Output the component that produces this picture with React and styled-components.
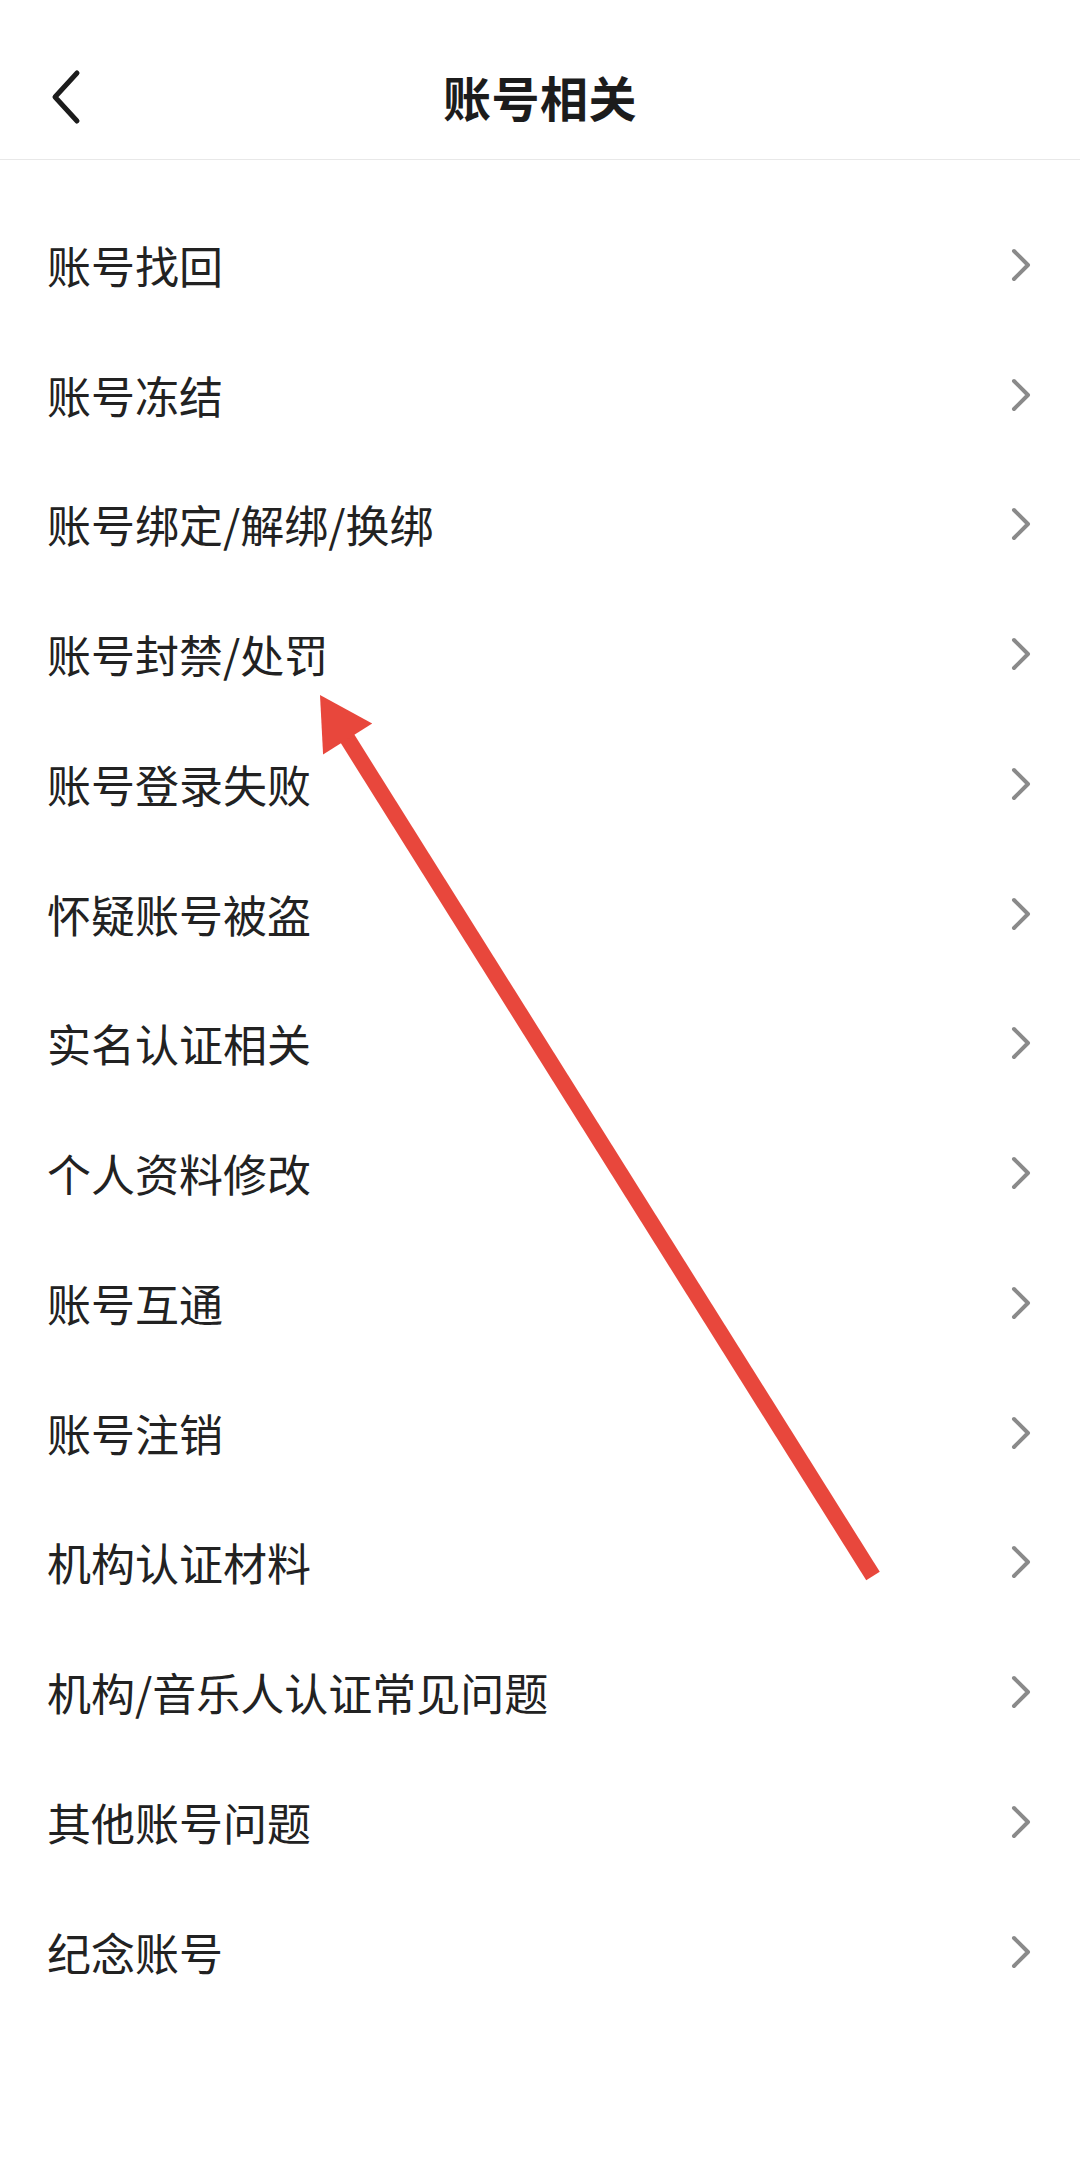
import React from "react";
import styled, { createGlobalStyle } from "styled-components";

const Global = createGlobalStyle`
  html, body { margin: 0; padding: 0; background: #ffffff; }
  body { font-family: "Noto Sans CJK SC", "Noto Sans", sans-serif; }
`;

const Page = styled.div`
  position: relative;
  width: 1080px;
  min-height: 2164px;
  background: #ffffff;
  overflow: hidden;
`;

const Header = styled.header`
  position: relative;
  height: 160px;
  display: flex;
  align-items: center;
  justify-content: center;
  padding-top: 34px;
  border-bottom: 1.5px solid #e8e8e8;
  box-sizing: border-box;
`;

const BackButton = styled.button`
  position: absolute;
  left: 44px;
  top: 97px;
  transform: translateY(-50%);
  width: 44px;
  height: 60px;
  padding: 0;
  border: none;
  background: transparent;
  display: flex;
  align-items: center;
  justify-content: center;
`;

const Title = styled.h1`
  margin: 0;
  font-size: 48px;
  font-weight: 700;
  color: #1c1c1c;
  letter-spacing: 0.5px;
  line-height: 1.2;
`;

const List = styled.ul`
  list-style: none;
  margin: 0;
  padding: 40px 0 0 0;
`;

const Row = styled.li`
  height: 129.75px;
  display: flex;
  align-items: center;
  justify-content: space-between;
  padding: 0 48px 0 47px;
  box-sizing: border-box;
`;

const Label = styled.span`
  font-size: 44px;
  color: #222222;
  font-weight: 400;
`;

const Overlay = styled.svg`
  position: absolute;
  left: 0;
  top: 0;
  pointer-events: none;
`;

const items = [
  "账号找回",
  "账号冻结",
  "账号绑定/解绑/换绑",
  "账号封禁/处罚",
  "账号登录失败",
  "怀疑账号被盗",
  "实名认证相关",
  "个人资料修改",
  "账号互通",
  "账号注销",
  "机构认证材料",
  "机构/音乐人认证常见问题",
  "其他账号问题",
  "纪念账号",
];

const Chevron = () => (
  <svg width="22" height="34" viewBox="0 0 22 34">
    <polyline
      points="4,3 18,17 4,31"
      fill="none"
      stroke="#8a8a8a"
      strokeWidth="4"
      strokeLinecap="round"
      strokeLinejoin="round"
    />
  </svg>
);

export default function App() {
  const tail = [873, 1576];
  const tip = [320, 695];
  const dx = tip[0] - tail[0];
  const dy = tip[1] - tail[1];
  const len = Math.hypot(dx, dy);
  const ux = dx / len;
  const uy = dy / len;
  const headLen = 52;
  const half = 29;
  const bx = tip[0] - ux * headLen;
  const by = tip[1] - uy * headLen;
  const px = -uy;
  const py = ux;
  const head = `${tip[0]},${tip[1]} ${bx + px * half},${by + py * half} ${bx - px * half},${by - py * half}`;

  return (
    <>
      <Global />
      <Page>
        <Header>
          <BackButton aria-label="back">
            <svg width="34" height="56" viewBox="0 0 34 56">
              <polyline
                points="28,4 6,28 28,52"
                fill="none"
                stroke="#1c1c1c"
                strokeWidth="5"
                strokeLinecap="round"
                strokeLinejoin="round"
              />
            </svg>
          </BackButton>
          <Title>账号相关</Title>
        </Header>
        <List>
          {items.map((t) => (
            <Row key={t}>
              <Label>{t}</Label>
              <Chevron />
            </Row>
          ))}
        </List>
        <Overlay width="1080" height="2164" viewBox="0 0 1080 2164">
          <line
            x1={tail[0]}
            y1={tail[1]}
            x2={bx + ux * 2}
            y2={by + uy * 2}
            stroke="#e8473c"
            strokeWidth="16"
          />
          <polygon points={head} fill="#e8473c" />
        </Overlay>
      </Page>
    </>
  );
}
